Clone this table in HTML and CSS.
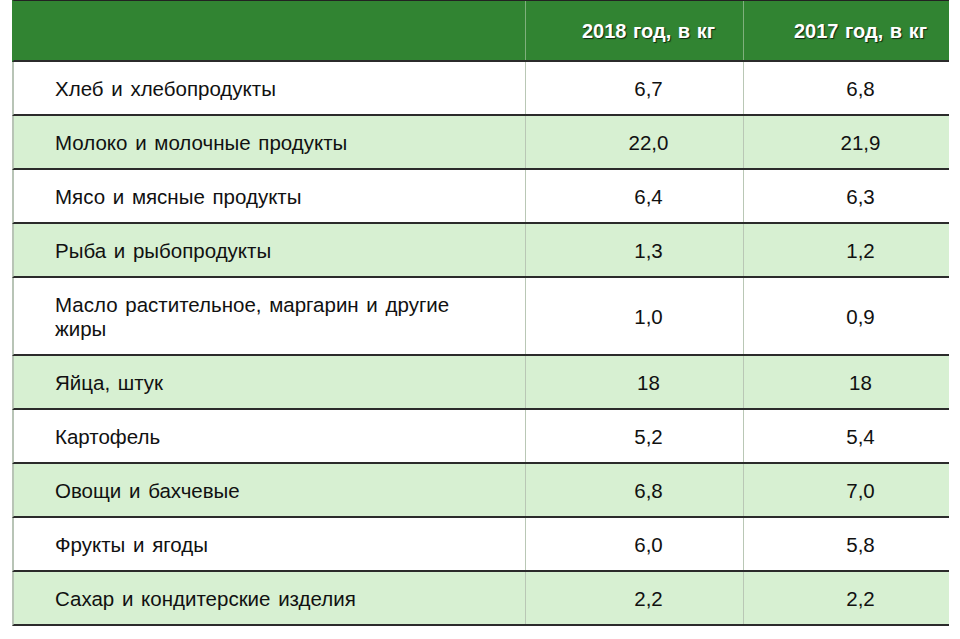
FILE: index.html
```html
<!DOCTYPE html>
<html lang="ru">
<head>
<meta charset="utf-8">
<title>Потребление продуктов</title>
<link rel="stylesheet" href="styles.css">
</head>
<body>
<div class="table">
  <div class="row head">
    <div class="cell label"></div>
    <div class="cell num">2018 год, в кг</div>
    <div class="cell num">2017 год, в кг</div>
  </div>
  <div class="row">
    <div class="cell label">Хлеб и хлебопродукты</div>
    <div class="cell num">6,7</div>
    <div class="cell num">6,8</div>
  </div>
  <div class="row alt">
    <div class="cell label">Молоко и молочные продукты</div>
    <div class="cell num">22,0</div>
    <div class="cell num">21,9</div>
  </div>
  <div class="row">
    <div class="cell label">Мясо и мясные продукты</div>
    <div class="cell num">6,4</div>
    <div class="cell num">6,3</div>
  </div>
  <div class="row alt">
    <div class="cell label">Рыба и рыбопродукты</div>
    <div class="cell num">1,3</div>
    <div class="cell num">1,2</div>
  </div>
  <div class="row tall">
    <div class="cell label">Масло растительное, маргарин и другие<br>жиры</div>
    <div class="cell num">1,0</div>
    <div class="cell num">0,9</div>
  </div>
  <div class="row alt">
    <div class="cell label">Яйца, штук</div>
    <div class="cell num">18</div>
    <div class="cell num">18</div>
  </div>
  <div class="row">
    <div class="cell label">Картофель</div>
    <div class="cell num">5,2</div>
    <div class="cell num">5,4</div>
  </div>
  <div class="row alt">
    <div class="cell label">Овощи и бахчевые</div>
    <div class="cell num">6,8</div>
    <div class="cell num">7,0</div>
  </div>
  <div class="row">
    <div class="cell label">Фрукты и ягоды</div>
    <div class="cell num">6,0</div>
    <div class="cell num">5,8</div>
  </div>
  <div class="row alt">
    <div class="cell label">Сахар и кондитерские изделия</div>
    <div class="cell num">2,2</div>
    <div class="cell num">2,2</div>
  </div>
</div>
</body>
</html>
```
FILE: styles.css
```css
html, body {
  margin: 0;
  padding: 0;
  background: #ffffff;
}
body {
  font-family: "Liberation Sans", Arial, sans-serif;
  color: #111111;
}
.table {
  margin-left: 12px;
  width: 937px;
}
.row {
  display: grid;
  grid-template-columns: 511px 218px 206px;
  height: 54px;
  box-sizing: border-box;
  border-bottom: 2px solid #2b2b2b;
  border-left: 2px solid #b8c4b6;
  background: #ffffff;
}
.row.alt {
  background: #d7f0d2;
}
.row.tall {
  height: 78px;
}
.row.head {
  height: 62px;
  border-top: 1px solid #222;
  border-left: 2px solid #318432;
  background: #318432;
}
.cell {
  display: flex;
  align-items: center;
  padding-top: 2px;
  font-size: 20.5px;
  line-height: 24px;
  word-spacing: 2px;
}
.cell + .cell {
  border-left: 1px solid #b9c7b5;
}
.head .cell {
  padding-top: 0;
}
.head .cell + .cell {
  border-left: 1px solid #7fb07c;
}
.label {
  padding-left: 41px;
}
.num {
  justify-content: center;
  padding-left: 28px;
}
.head .cell {
  color: #ffffff;
  font-weight: bold;
  font-size: 20px;
  text-shadow: 1px 1px 1px rgba(0, 0, 0, 0.7);
  word-spacing: 1px;
}
```
